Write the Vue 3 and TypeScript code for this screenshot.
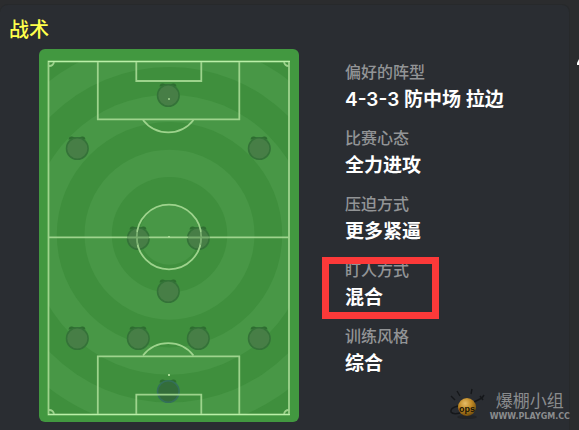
<script setup lang="ts">
interface Player {
  x: number
  y: number
  keeper?: boolean
}

interface Tactic {
  label: string
  value: string
  marked?: boolean
}

const rings: number[] = [195, 140, 85, 30]

const players: Player[] = [
  { x: 129, y: 46 },
  { x: 38, y: 99 },
  { x: 220, y: 99 },
  { x: 99, y: 189 },
  { x: 159, y: 189 },
  { x: 129, y: 242 },
  { x: 38, y: 289 },
  { x: 99, y: 289 },
  { x: 159, y: 289 },
  { x: 220, y: 289 },
  { x: 129, y: 342, keeper: true },
]

const tactics: Tactic[] = [
  { label: '偏好的阵型', value: '4-3-3 防中场 拉边' },
  { label: '比赛心态', value: '全力进攻' },
  { label: '压迫方式', value: '更多紧逼' },
  { label: '盯人方式', value: '混合', marked: true },
  { label: '训练风格', value: '综合' },
]
</script>

<template>
  <div class="page">
    <main class="panel">
      <h1 class="title">战术</h1>
      <div class="content">
        <svg class="pitch" viewBox="0 0 260 373" role="img" aria-label="4-3-3">
          <defs>
            <clipPath id="grass"><rect x="9" y="12" width="242" height="354" /></clipPath>
          </defs>
          <rect width="260" height="373" rx="6" fill="#429840" />
          <g clip-path="url(#grass)">
            <rect width="260" height="373" fill="#3f8f3d" />
            <template v-for="r in rings" :key="r">
              <circle cx="130.5" cy="185.7" :r="r" fill="#489746" />
              <circle v-if="r > 30" cx="130.5" cy="185.7" :r="r - 27.3" fill="#3f8f3d" />
            </template>
          </g>
          <g v-for="(p, i) in players" :key="i" :transform="`translate(${p.x} ${p.y})`">
            <path d="M-8.500-8.500Q-8-12-5-11.500Q0-9.500 5-11.500Q8-12 8.500-8.500Z" fill="#2e6d30" />
            <circle
              r="10.800"
              cx="0.300"
              cy="0.500"
              stroke-width="1.500"
              :fill="p.keeper ? '#336d3a' : '#477e46'"
              :stroke="p.keeper ? '#34705a' : '#347238'"
            />
          </g>
          <g fill="none" stroke="#a5d993" stroke-width="1.800" opacity="0.930">
            <rect x="9.500" y="12.500" width="240.500" height="353" />
            <path d="M9.500 188.300H250M58.800 12.500V70.300H200.300V12.500M97.300 12.500V32H162.300V12.500M58.800 365.500V307.300H200.300V365.500M97.300 365.500V345.700H162.300V365.500" />
            <path d="M104 71A32 32 0 0 0 154.500 71M104 306.500A32 32 0 0 1 154.500 306.500" />
            <circle cx="130" cy="188" r="32.300" />
            <path d="M10 17A5 5 0 0 0 15 13M245 13A5 5 0 0 0 250 17M10 361A5 5 0 0 1 15 365M245 365A5 5 0 0 1 250 361" />
          </g>
          <path d="M9 12.500H251M9 365.500H251" stroke="#baf0a8" stroke-width="1.200" />
          <g fill="#a5d993">
            <rect x="129" y="49" width="2" height="2" opacity="0.700" />
            <rect x="129" y="187" width="2" height="2" />
            <rect x="129" y="325" width="2" height="2" />
          </g>
          <g fill="none" stroke="#477e46" stroke-opacity="0.450" stroke-width="2">
            <path d="M88 188H110M149 188H171M98 183Q97 189 98 196M162 183Q163 189 162 196" />
          </g>
        </svg>

        <dl class="tactics">
          <div v-for="t in tactics" :key="t.label" class="tactic" :class="{ marked: t.marked }">
            <dt>{{ t.label }}</dt>
            <dd>{{ t.value }}</dd>
          </div>
        </dl>
      </div>
    </main>

    <svg class="edge" viewBox="0 0 2 6" aria-hidden="true">
      <path d="M2 0V6H0V4Z" fill="#fff" />
    </svg>

    <div class="watermark">
      <svg class="ball" viewBox="0 0 38 34" aria-hidden="true">
        <defs>
          <radialGradient id="gold" cx="0.400" cy="0.300" r="0.700">
            <stop offset="0" stop-color="#e5bd68" />
            <stop offset="0.500" stop-color="#c18a25" />
            <stop offset="1" stop-color="#76500d" />
          </radialGradient>
        </defs>
        <ellipse cx="19" cy="29" rx="10" ry="2" fill="#222427" />
        <path d="M3 8L7 12M9 3L12 8M24 1L23 6" stroke="#15171a" stroke-width="1.400" />
        <path d="M26 14L34 10M32 8L35 12M34 10L36 7M10 18Q2 20 3 24Q5 27 12 25" fill="none" stroke="#15171a" stroke-width="1.500" />
        <circle cx="19" cy="19" r="9" fill="url(#gold)" />
        <text x="11" y="24" class="ball-text">ops</text>
      </svg>
      <div class="site">
        <span class="site-name">爆棚小组</span>
        <span class="site-url">WWW.PLAYGM.CC</span>
      </div>
    </div>
  </div>
</template>

<style>
body {
  margin: 0;
  background: #2b2c2e;
}
</style>

<style scoped>
.page {
  position: relative;
  box-sizing: border-box;
  min-height: 100vh;
  padding: 4px 9px 0 0;
  overflow: hidden;
  font-family: Inter, "Noto Sans CJK SC", sans-serif;
}

.panel {
  box-sizing: border-box;
  min-height: calc(100vh - 4px);
  padding: 13px 9px 8px;
  border: 1px solid #27292b;
  border-left: 0;
  border-radius: 8px 8px 0 0;
  background: #2a2d32;
}

.title {
  margin: 0;
  color: #ffff4b;
  font-size: 20px;
  font-weight: 500;
  line-height: 24px;
}

.content {
  display: flex;
  align-items: flex-start;
  gap: 46px;
  padding: 7px 0 0 30px;
}

.pitch {
  flex: none;
  width: 260px;
}

.tactics {
  display: flex;
  flex: 1;
  flex-direction: column;
  gap: 12px;
  margin: 10px 0 0;
}

.tactic {
  position: relative;
}

.tactic dt {
  color: #929496;
  font-size: 16px;
  font-weight: 500;
  line-height: 26px;
}

.tactic dd {
  margin: 2px 0 0;
  color: #fff;
  font-size: 19px;
  font-weight: 600;
  line-height: 26px;
}

.marked::after {
  position: absolute;
  top: 0;
  left: -23px;
  box-sizing: border-box;
  width: 117px;
  height: 62px;
  border: 7px solid #fc3939;
  content: "";
}

.edge {
  position: absolute;
  top: 59px;
  right: 0;
  width: 2px;
  height: 6px;
}

.watermark {
  position: absolute;
  right: 9px;
  bottom: 9px;
  display: flex;
  align-items: flex-end;
  gap: 4px;
}

.ball {
  width: 38px;
  height: 34px;
}

.ball-text {
  fill: #191508;
  font: 700 9px "Liberation Sans", sans-serif;
}

.site {
  display: flex;
  flex-direction: column;
  align-items: center;
  color: #8a8c8e;
}

.site-name {
  font-family: "Noto Sans CJK SC", sans-serif;
  font-size: 17px;
  line-height: 24px;
}

.site-url {
  font: 700 8px/10px "DejaVu Sans", sans-serif;
}
</style>
